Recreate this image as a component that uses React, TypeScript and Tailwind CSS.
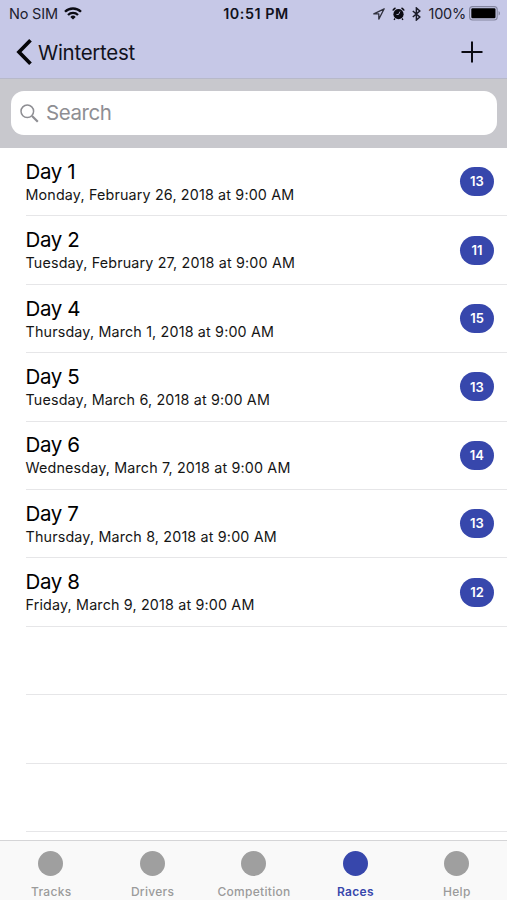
import React from 'react';

const races = [
    { name: 'Day 1', date: 'Monday, February 26, 2018 at 9:00 AM', count: 13 },
    { name: 'Day 2', date: 'Tuesday, February 27, 2018 at 9:00 AM', count: 11 },
    { name: 'Day 4', date: 'Thursday, March 1, 2018 at 9:00 AM', count: 15 },
    { name: 'Day 5', date: 'Tuesday, March 6, 2018 at 9:00 AM', count: 13 },
    { name: 'Day 6', date: 'Wednesday, March 7, 2018 at 9:00 AM', count: 14 },
    { name: 'Day 7', date: 'Thursday, March 8, 2018 at 9:00 AM', count: 13 },
    { name: 'Day 8', date: 'Friday, March 9, 2018 at 9:00 AM', count: 12 },
];

const tabs = ['Tracks', 'Drivers', 'Competition', 'Races', 'Help'];

function StatusBar() {
    return (
        <div className="grid h-[27px] grid-cols-3 items-center pl-[9px] pr-[6px] text-[14.5px] text-[#20212e]">
            <div className="flex items-center gap-[6px]">
                <span className="tracking-[-0.2px]">No SIM</span>
                <svg width="18" height="13" viewBox="0 0 18 13" fill="none" stroke="#0b0b12" strokeWidth="2.3">
                    <path d="M1 4.8a11.3 11.3 0 0 1 16 0" />
                    <path d="M4 8a7.1 7.1 0 0 1 10 0" />
                    <path d="M9 12.6 6.3 9.9a3.9 3.9 0 0 1 5.4 0Z" fill="#0b0b12" stroke="none" />
                </svg>
            </div>
            <div className="pl-[2px] text-center text-[14.3px] font-semibold tracking-[0.55px] text-[#11121c]">10:51 PM</div>
            <div className="flex items-center justify-end">
                <svg className="mr-[7px]" width="12" height="12" viewBox="0 0 12 12" fill="none" stroke="#30313e" strokeWidth="1.3" strokeLinejoin="round">
                    <path d="M11.2.8.8 5.9h5v5.2Z" />
                </svg>
                <svg className="mr-[7px]" width="13" height="14" viewBox="0 0 13 14" fill="none">
                    <circle cx="6.5" cy="7.2" r="5.1" fill="#0b0b12" />
                    <path d="M.8 3.5A6 6 0 0 1 3.500 1M12.2 3.5A6 6 0 0 0 9.5 1" stroke="#0b0b12" strokeWidth="1.5" />
                    <path d="M3 11.5 2 12.800M10 11.5l1 1.3" stroke="#0b0b12" strokeWidth="1.3" />
                    <path d="M8 4.5 6.5 7.500H4.5" stroke="#c6c8e7" strokeWidth=".8" />
                </svg>
                <svg className="mr-[8px]" width="9" height="14" viewBox="0 0 9 14" fill="none" stroke="#1b1c28" strokeWidth="1.5">
                    <path d="m.8 4 7 6-3.4 3V1l3.4 3-7 6" />
                </svg>
                <span className="mr-[3px] tracking-[-0.25px]">100%</span>
                <svg width="32" height="15" viewBox="0 0 32 15">
                    <rect x=".6" y=".6" width="27.6" height="13.4" rx="3" fill="none" stroke="#8486a0" strokeWidth="1.1" />
                    <rect x="2.3" y="2.3" width="24.2" height="10" rx="1.2" fill="#000" />
                    <path d="M29.6 5v4.6c1.9-.8 1.9-3.8 0-4.6Z" fill="#8486a0" />
                </svg>
            </div>
        </div>
    );
}

function Header() {
    return (
        <header className="h-[79px] border-b border-[#b7b9ca] bg-[#c6c8e7]">
            <StatusBar />
            <div className="flex h-[50px] items-center justify-between pl-4 pr-6">
                <div className="flex items-center gap-[6px]">
                    <svg width="16" height="26" viewBox="0 0 16 26" fill="none" stroke="#050508" strokeWidth="3.7">
                        <path d="M14.5 1.3 3 13l11.5 11.7" />
                    </svg>
                    <span className="pt-[2px] text-[20.5px] tracking-[-0.28px] text-[#11121c]">Wintertest</span>
                </div>
                <svg width="22" height="22" viewBox="0 0 22 22" stroke="#0b0b12" strokeWidth="2">
                    <path d="M.5 11h21M11 .5v21" />
                </svg>
            </div>
        </header>
    );
}

function SearchBar() {
    return (
        <div className="h-[69px] bg-[#c8c8cd] px-[10.5px] pt-[12.4px]">
            <div className="flex h-[44px] items-center gap-[7.5px] rounded-[13px] bg-white pl-[9px]">
                <svg width="19" height="19" viewBox="0 0 19 19" fill="none" stroke="#8e8e93">
                    <circle cx="7.3" cy="7.3" r="6.3" strokeWidth="1.5" />
                    <path d="m12 12 5.8 5.8" strokeWidth="2.2" />
                </svg>
                <span className="text-[20.5px] tracking-[-0.45px] text-[#8e8e93]">Search</span>
            </div>
        </div>
    );
}

export default function App() {
    return (
        <div className="flex h-[900px] w-[507px] flex-col overflow-hidden bg-white font-['Inter',sans-serif]">
            <Header />
            <SearchBar />
            <main className="min-h-0 flex-1 overflow-hidden pl-[25.5px]">
                {races.map((race) => (
                    <div key={race.name} className="flex h-[68.4px] items-center justify-between border-b border-[#e6e6e8] pr-[13px]">
                        <div className="pt-[0.4px]">
                            <h3 className="text-[20.5px] leading-[25px] tracking-[-0.4px] text-black">{race.name}</h3>
                            <p className="text-[14.3px] leading-[21px] tracking-[0.17px] text-[#151515]">{race.date}</p>
                        </div>
                        <span className="flex h-[29px] min-w-[34px] items-center justify-center rounded-full bg-[#3747ac] px-[10px] pt-px text-[13px] font-semibold text-white">
                            {race.count}
                        </span>
                    </div>
                ))}
                <div className="h-[68.4px] border-b border-[#e6e6e8]" />
                <div className="h-[68.4px] border-b border-[#e6e6e8]" />
                <div className="h-[68.4px] border-b border-[#e6e6e8]" />
            </main>
            <nav className="grid h-[60px] shrink-0 grid-cols-5 border-t border-[#d5d5d7] bg-[#f9f9f9]">
                {tabs.map((tab) => (
                    <div
                        key={tab}
                        className={`flex flex-col items-center pt-[10px] pl-[0.5px] ${tab === 'Races' ? 'text-[#3747ac] font-semibold' : 'text-[#9b9b9b] font-medium'}`}
                    >
                        <span className={`size-[25px] rounded-full ${tab === 'Races' ? 'bg-[#3747ac]' : 'bg-[#9f9f9f]'}`} />
                        <span className="mt-[7px] pl-[0.5px] text-[12px] leading-[18px] tracking-[0.3px]">{tab}</span>
                    </div>
                ))}
            </nav>
        </div>
    );
}
